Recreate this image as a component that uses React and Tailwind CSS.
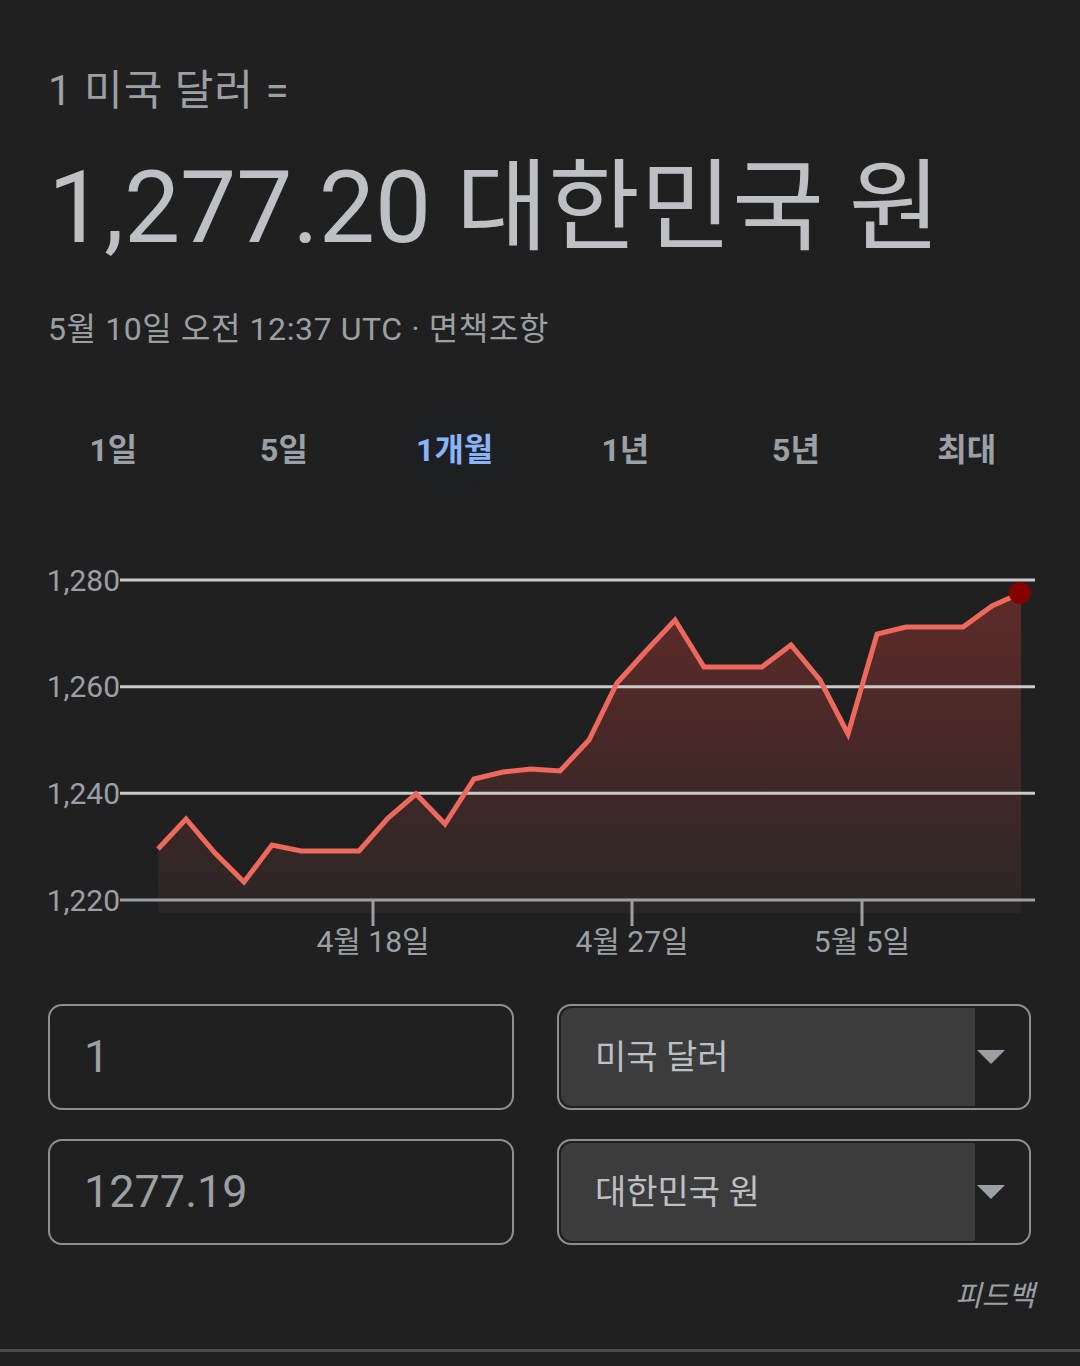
import React from "react";

const pts = [
  [158, 849], [186, 819], [215, 853], [244, 882], [272, 845], [301, 851], [330, 851], [359, 851],
  [388, 818], [416, 794], [445, 824], [474, 779], [503, 772], [531, 769], [560, 771], [589, 740],
  [617, 683], [646, 651], [675, 620], [704, 667], [733, 667], [762, 667], [791, 645], [820, 680],
  [848, 734], [877, 634], [906, 627], [934, 627], [963, 627], [992, 606], [1021, 593],
];

const FF = "Roboto, 'Noto Sans CJK KR', sans-serif";

function Chart() {
  const line = pts.map((p) => p.join(",")).join(" ");
  const area = line + " 1021,913 158,913";
  const grid = [
    { y: 580, label: "1,280" },
    { y: 686.7, label: "1,260" },
    { y: 793.3, label: "1,240" },
  ];
  const ticks = [
    { x: 373, label: "4월 18일" },
    { x: 632, label: "4월 27일" },
    { x: 862, label: "5월 5일" },
  ];
  return (
    <svg width="1080" height="400" viewBox="0 560 1080 400" className="block">
      <defs>
        <linearGradient id="ar" x1="0" y1="0" x2="0" y2="1">
          <stop offset="0" stopColor="#5e2b29" />
          <stop offset="1" stopColor="#2b2626" />
        </linearGradient>
      </defs>
      <polygon points={area} fill="url(#ar)" />
      {grid.map((g) => (
        <g key={g.label}>
          <line x1="120" x2="1035" y1={g.y} y2={g.y} stroke="#dcdcdc" strokeWidth="3" strokeOpacity="0.9" />
          <text x="120" y={g.y + 10.5} textAnchor="end" fontSize="30" fill="#9aa0a6" fontFamily={FF}>
            {g.label}
          </text>
        </g>
      ))}
      <line x1="120" x2="1035" y1="900" y2="900" stroke="#9aa0a6" strokeWidth="3" />
      <text x="120" y="910.5" textAnchor="end" fontSize="30" fill="#9aa0a6" fontFamily={FF}>
        1,220
      </text>
      {ticks.map((t) => (
        <g key={t.label}>
          <line x1={t.x} x2={t.x} y1="900" y2="926" stroke="#9aa0a6" strokeWidth="3" />
          <text x={t.x} y="952" textAnchor="middle" fontSize="30" fill="#9aa0a6" fontFamily={FF}>
            {t.label}
          </text>
        </g>
      ))}
      <polyline points={line} fill="none" stroke="#ee685c" strokeWidth="5" strokeLinejoin="miter" />
      <circle cx="1020" cy="593" r="11" fill="#820000" />
    </svg>
  );
}

function Caret() {
  return (
    <svg width="28" height="14" viewBox="0 0 28 14">
      <polygon points="0,0 28,0 14,14" fill="#9aa0a6" />
    </svg>
  );
}

export default function App() {
  const tabs = ["1일", "5일", "1개월", "1년", "5년", "최대"];
  return (
    <div className="w-[1080px] min-h-[1366px] bg-[#202020] flex flex-col pt-[66px] font-['Roboto','Noto_Sans_CJK_KR',sans-serif]">
      <div className="h-[50px] leading-[50px] px-12 text-[42px] tracking-[1px] text-[#9aa0a6] whitespace-nowrap">1 미국 달러 =</div>
      <div className="mt-[32px] h-[120px] leading-[120px] px-12 text-[100px] text-[#bdc1c6] whitespace-nowrap">1,277.20 대한민국 원</div>
      <div className="mt-[41px] h-[40px] leading-[40px] px-12 text-[32px] tracking-[0.6px] text-[#9aa0a6] whitespace-nowrap">
        5월 10일 오전 12:37 UTC · 면책조항
      </div>
      <div className="mt-[61px] h-[80px] px-[28px] grid grid-cols-6">
        {tabs.map((t) => (
          <div key={t} className="flex items-center justify-center">
            {t === "1개월" ? (
              <div className="w-[100px] h-[80px] rounded-full bg-[#1d1f22] flex items-center justify-center text-[32px] font-bold text-[#8ab4f8]">
                {t}
              </div>
            ) : (
              <div className="text-[32px] font-bold text-[#9aa0a6]">{t}</div>
            )}
          </div>
        ))}
      </div>
      <div className="mt-[70px]">
        <Chart />
      </div>
      <div className="mt-[44px] px-12 flex flex-col gap-[29px]">
        {[
          ["1", "미국 달러"],
          ["1277.19", "대한민국 원"],
        ].map(([v, c]) => (
          <div key={c} className="flex gap-[43px]">
            <div className="w-[466px] h-[106px] border-2 border-[#8f8f8f] rounded-[14px] flex items-center pl-[34px] text-[45px] text-[#9aa0a6]">
              {v}
            </div>
            <div className="w-[474px] h-[106px] border-2 border-[#8f8f8f] rounded-[14px] flex overflow-hidden p-[2px]">
              <div className="flex-1 bg-[#3c3c3c] rounded-l-[11px] flex items-center pl-[34px] text-[34px] text-[#bdc1c6]">
                {c}
              </div>
              <div className="w-[52px] flex items-center justify-start pl-[2px]">
                <Caret />
              </div>
            </div>
          </div>
        ))}
      </div>
      <div className="mt-[21px] h-[60px] leading-[60px] text-right pr-[45px] text-[29px] italic text-[#9aa0a6]">피드백</div>
      <div className="mt-[23px] h-[3px] bg-[#4a4c4e]" />
      <div className="flex-1" />
    </div>
  );
}
